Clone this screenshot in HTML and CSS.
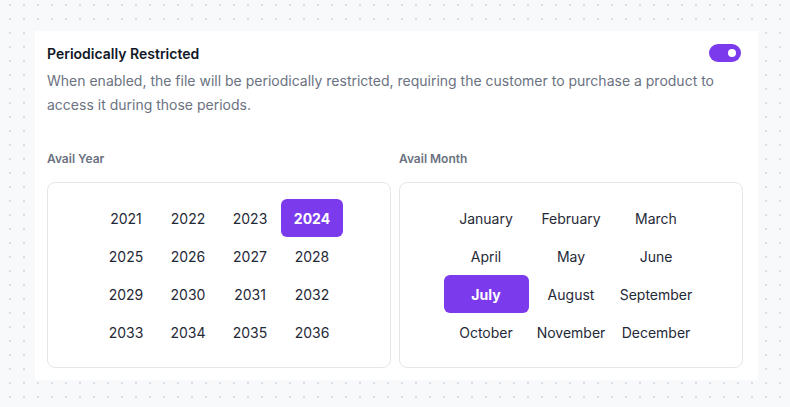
FILE: index.html
```html
<!DOCTYPE html>
<html>
<head>
<meta charset="utf-8">
<link rel="stylesheet" href="styles.css">
</head>
<body>
<div class="panel">
  <div class="head">
    <div class="title">Periodically Restricted</div>
    <div class="toggle"><span class="knob"></span></div>
  </div>
  <p class="desc">When enabled, the file will be periodically restricted, requiring the customer to purchase a product to access it during those periods.</p>
  <div class="pickers">
    <div class="picker">
      <div class="label">Avail Year</div>
      <div class="box">
        <div class="grid years">
          <div class="cell">2021</div><div class="cell">2022</div><div class="cell">2023</div><div class="cell active">2024</div>
          <div class="cell">2025</div><div class="cell">2026</div><div class="cell">2027</div><div class="cell">2028</div>
          <div class="cell">2029</div><div class="cell">2030</div><div class="cell">2031</div><div class="cell">2032</div>
          <div class="cell">2033</div><div class="cell">2034</div><div class="cell">2035</div><div class="cell">2036</div>
        </div>
      </div>
    </div>
    <div class="picker">
      <div class="label">Avail Month</div>
      <div class="box">
        <div class="grid months">
          <div class="cell">January</div><div class="cell">February</div><div class="cell">March</div>
          <div class="cell">April</div><div class="cell">May</div><div class="cell">June</div>
          <div class="cell active">July</div><div class="cell">August</div><div class="cell">September</div>
          <div class="cell">October</div><div class="cell">November</div><div class="cell">December</div>
        </div>
      </div>
    </div>
  </div>
</div>
</body>
</html>
```
FILE: styles.css
```css
html, body {
  margin: 0;
  height: 100%;
}
body {
  background-color: #f8f9fb;
  background-image: radial-gradient(circle, #dcdfe5 1px, transparent 1.2px);
  background-size: 14px 14px;
  background-position: 3px -2px;
  font-family: Inter, "Noto Sans", sans-serif;
  overflow: hidden;
}
.panel {
  margin: 31px 0 0 35px;
  width: 723px;
  box-sizing: border-box;
  padding: 13px 15px 12px 12px;
  background: #fff;
}
.head {
  display: flex;
  justify-content: space-between;
  align-items: center;
  height: 20px;
}
.title {
  font-size: 14px;
  font-weight: 600;
  color: #111827;
  line-height: 20px;
}
.toggle {
  width: 32px;
  height: 18px;
  border-radius: 9px;
  background: #7c3aed;
  display: flex;
  align-items: center;
  justify-content: flex-end;
  padding-right: 5px;
  box-sizing: border-box;
  margin-right: 2px;
  margin-top: -2px;
}
.knob {
  width: 8px;
  height: 8px;
  border-radius: 50%;
  background: #fff;
}
.desc {
  margin: 5px 0 0;
  font-size: 14px;
  line-height: 24px;
  color: #6b7280;
}
.pickers {
  display: flex;
  gap: 8px;
  margin-top: 34px;
}
.picker {
  flex: 1;
}
.label {
  font-size: 12px;
  font-weight: 600;
  color: #6b7280;
  line-height: 16px;
  margin-bottom: 15px;
}
.box {
  border: 1px solid #e5e7eb;
  border-radius: 8px;
  padding: 16px 0 16px;
  display: flex;
  justify-content: center;
}
.grid {
  display: grid;
  grid-auto-rows: 38px;
}
.years {
  grid-template-columns: repeat(4, 62px);
}
.months {
  grid-template-columns: repeat(3, 85px);
}
.cell {
  display: flex;
  align-items: center;
  justify-content: center;
  font-size: 14px;
  color: #1f2937;
  border-radius: 6px;
}
.cell.active {
  background: #7c3aed;
  color: #fff;
  font-weight: 700;
}
```
